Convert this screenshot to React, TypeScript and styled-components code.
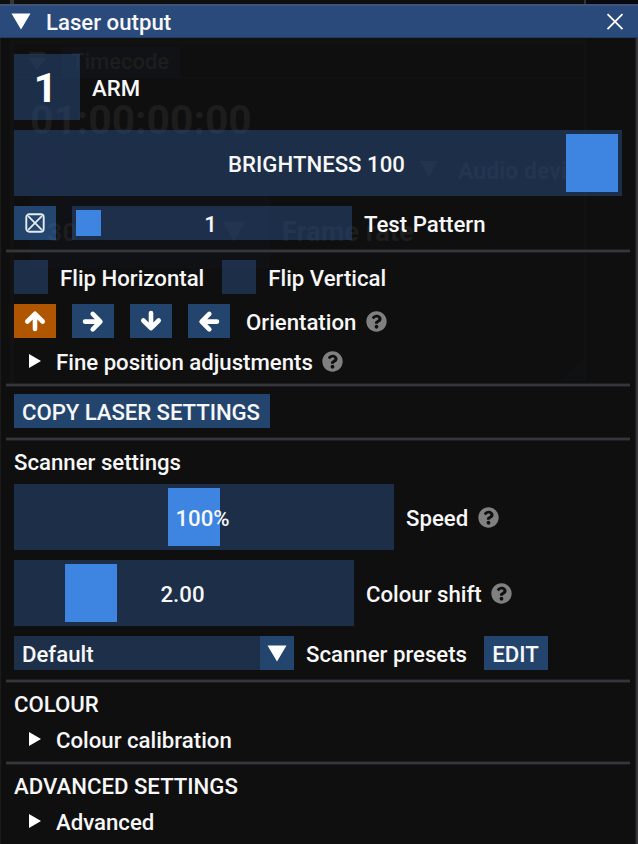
import React from "react";
import styled, { createGlobalStyle, css } from "styled-components";
import { FaQuestionCircle } from "react-icons/fa";

const GlobalStyle = createGlobalStyle`
  * { box-sizing: border-box; }
  body { margin: 0; background: #0f0f0f; }
`;

const Window = styled.main`
  position: relative;
  width: 638px;
  height: 844px;
  overflow: hidden;
  padding-top: 4px;
  background: #0f0f0f;
  color: #f7f7f7;
  font: 500 22.2px/26px Roboto, sans-serif;
  white-space: nowrap;
`;

const TitleBar = styled.header`
  position: relative;
  display: flex;
  align-items: center;
  height: 34px;
  padding: 0 14px 0 11px;
  gap: 15px;
  background: #294a7a;
  border-top: 2px solid #405478;
  border-bottom: 1px solid #213b61;
`;

const Title = styled.h1`
  flex: 1;
  margin: 0;
  padding-top: 1px;
  font: inherit;
`;

const Content = styled.div`
  position: relative;
  display: flex;
  flex-direction: column;
  align-items: flex-start;
  gap: 10px;
  padding: 16px 16px 0 14px;
`;

const Row = styled.div<{ $gap?: number }>`
  display: flex;
  align-items: center;
  gap: ${(p) => p.$gap ?? 12}px;
`;

const Separator = styled.hr`
  align-self: stretch;
  height: 4px;
  margin: -1px -8px -3px;
  border: solid #1e1e21;
  border-width: 1px 0;
  background: #36363d;
`;

const Label = styled.span`
  position: relative;
  top: 1px;
`;

const Track = styled.div<{ $width: number; $height?: number }>`
  position: relative;
  display: flex;
  align-items: center;
  justify-content: center;
  width: ${(p) => p.$width}px;
  height: ${(p) => p.$height ?? 66}px;
  padding-right: 3px;
  background: rgba(41, 74, 122, 0.54);
`;

const Handle = styled.div<{ $left: number; $width?: number }>`
  position: absolute;
  top: 4px;
  bottom: 4px;
  left: ${(p) => p.$left}px;
  width: ${(p) => p.$width ?? 52}px;
  background: #3d85e0;
`;

const Toggle = styled.div<{ $size: number }>`
  display: flex;
  align-items: center;
  justify-content: center;
  width: ${(p) => p.$size}px;
  height: ${(p) => p.$size}px;
  padding: 2px 3px 0 0;
  background: rgba(41, 74, 122, 0.54);
  color: #fff;
  font-size: 41px;
  font-weight: 700;
`;

const buttonBase = css`
  display: flex;
  align-items: center;
  justify-content: center;
  height: 34px;
  padding: 0;
  border: 0;
  color: #f7f7f7;
  font: inherit;
`;

const IconButton = styled.button<{ $active?: boolean }>`
  ${buttonBase}
  width: 42px;
  background: ${(p) => (p.$active ? "#b05500" : "rgba(66, 150, 250, 0.4)")};
`;

const TextButton = styled.button<{ $width: number }>`
  ${buttonBase}
  width: ${(p) => p.$width}px;
  padding-right: 1px;
  background: rgba(66, 150, 250, 0.4);
`;

const CopyButton = styled(TextButton)`
  padding-right: 2px;
  letter-spacing: -0.07px;
`;

const Combo = styled.div`
  display: flex;
  align-items: center;
  justify-content: space-between;
  width: 280px;
  height: 34px;
  padding-left: 8px;
  background: linear-gradient(to right, rgba(41, 74, 122, 0.54) 246px, rgba(66, 150, 250, 0.4) 246px);
`;

const ComboArrow = styled.span`
  display: flex;
  justify-content: center;
  width: 34px;
`;

const TreeRow = styled.div`
  display: flex;
  align-items: center;
  height: 26px;
  padding-left: 15px;
`;

const TreeLabel = styled(Label)`
  margin: 0 9px 0 15px;
`;

const HelpIcon = styled(FaQuestionCircle)`
  display: block;
  width: 21px;
  height: 21px;
  color: #808080;
`;

const LabelWithHelp = styled.div<{ $gap?: number }>`
  display: flex;
  align-items: center;
  gap: ${(p) => p.$gap ?? 10}px;
`;

/* Contents of the window underneath, faintly visible through this one. */
const Backdrop = styled.div`
  position: absolute;
  inset: 0;
`;

const GhostBox = styled.div<{ $x: number; $y: number; $w: number; $h: number; $color: string }>`
  position: absolute;
  left: ${(p) => p.$x}px;
  top: ${(p) => p.$y}px;
  width: ${(p) => p.$w}px;
  height: ${(p) => p.$h}px;
  background: ${(p) => p.$color};
`;

const GhostText = styled.span<{ $x: number; $y: number; $size: number; $bold?: boolean }>`
  position: absolute;
  left: ${(p) => p.$x}px;
  top: ${(p) => p.$y}px;
  color: #1d1d1d;
  font-size: ${(p) => p.$size}px;
  font-weight: ${(p) => (p.$bold ? 700 : 500)};
  line-height: 1;
`;

const GhostArrow = styled.svg<{ $x: number; $y: number }>`
  position: absolute;
  left: ${(p) => p.$x}px;
  top: ${(p) => p.$y}px;
`;

const DownTriangle = () => (
  <svg width="20" height="17" viewBox="0 0 20 17">
    <path d="M.5.5h19L10 16.5z" fill="#fff" />
  </svg>
);

const RightTriangle = () => (
  <svg width="12" height="14" viewBox="0 0 12 14">
    <path d="M0 0v14l12-7z" fill="#fff" />
  </svg>
);

const CloseIcon = () => (
  <svg width="18" height="18" viewBox="0 0 18 18">
    <path d="M1.5 1.2l15 15M16.5 1.2l-15 15" stroke="#fff" strokeWidth="1.8" />
  </svg>
);

const CrossedBox = () => (
  <svg width="20" height="20" viewBox="0 0 20 20" fill="none" stroke="#e6ebf1">
    <rect x="1.3" y="1.3" width="17.4" height="17.4" rx="3" strokeWidth="1.9" />
    <path d="M3.2 3.2l13.6 13.6M16.8 3.2L3.2 16.8" strokeWidth="1.7" />
  </svg>
);

const arrowPaths = {
  up: "M12 20V6M4.3 12.5L12 4.8l7.700 7.700",
  right: "M4 12.600H18M11.700 4.900L19.400 12.600l-7.700 7.700",
  down: "M12 4V18M4.300 11.500L12 19.200l7.700-7.700",
  left: "M20 12.600H6M12.300 4.900L4.600 12.600l7.700 7.700",
};

const Arrow = ({ dir }: { dir: keyof typeof arrowPaths }) => (
  <svg width="24" height="24" viewBox="0 0 24 24" fill="none">
    <path d={arrowPaths[dir]} stroke="#fff" strokeWidth="4.6" strokeLinecap="round" strokeLinejoin="round" />
  </svg>
);

export default function App() {
  return (
    <>
      <GlobalStyle />
      <Window>
        <Backdrop aria-hidden>
          <GhostBox $x={10} $y={0} $w={4} $h={4} $color="#36363d" />
          <GhostBox $x={584} $y={0} $w={2} $h={4} $color="#303036" />
          <GhostBox $x={586} $y={0} $w={52} $h={4} $color="#080813" />
          <GhostBox $x={10} $y={38} $w={4} $h={346} $color="#121213" />
          <GhostBox $x={14} $y={38} $w={571} $h={6} $color="#101211" />
          <GhostBox $x={62} $y={47} $w={118} $h={30} $color="#101216" />
          <GhostBox $x={14} $y={77} $w={571} $h={1} $color="#111412" />
          <GhostBox $x={584} $y={38} $w={2} $h={343} $color="#121213" />
          <GhostBox $x={30} $y={196} $w={240} $h={72} $color="#101115" />
          <GhostBox $x={31} $y={157} $w={30} $h={30} $color="#130f12" />
          <GhostBox $x={29} $y={52} $w={16} $h={3} $color="#1d1d1d" />
          <GhostArrow $x={28} $y={58} width="18" height="12" viewBox="0 0 18 12">
            <path d="M0 0h18L9 12z" fill="#1c1c1c" />
          </GhostArrow>
          <GhostArrow $x={420} $y={161} width="18" height="16" viewBox="0 0 18 16">
            <path d="M0 0h18L9 16z" fill="#1c1c1c" />
          </GhostArrow>
          <GhostArrow $x={223} $y={222} width="22" height="20" viewBox="0 0 22 20">
            <path d="M0 0h22L11 20z" fill="#1c1c1c" />
          </GhostArrow>
          <GhostArrow $x={561} $y={357} width="24" height="24" viewBox="0 0 24 24">
            <path d="M24 0v24H0z" fill="#101113" />
          </GhostArrow>
          <GhostText $x={71} $y={51} $size={22}>Timecode</GhostText>
          <GhostText $x={30} $y={100} $size={40.8} $bold>01:00:00:00</GhostText>
          <GhostText $x={458} $y={160} $size={23} $bold>Audio device</GhostText>
          <GhostText $x={47} $y={219} $size={26.5} $bold>30</GhostText>
          <GhostText $x={282} $y={219} $size={27.2} $bold>Frame rate</GhostText>
          <GhostBox $x={0} $y={38} $w={1} $h={806} $color="#1c1c1e" />
          <GhostBox $x={635} $y={38} $w={1} $h={806} $color="#1c1c1f" />
          <GhostBox $x={636} $y={5} $w={2} $h={839} $color="#343439" />
        </Backdrop>

        <TitleBar>
          <DownTriangle />
          <Title>Laser output</Title>
          <CloseIcon />
        </TitleBar>

        <Content>
          <Row>
            <Toggle $size={66}>1</Toggle>
            <Label>ARM</Label>
          </Row>
          <Track $width={608}>
            <Handle $left={552} />
            <Label>BRIGHTNESS 100</Label>
          </Track>
          <Row>
            <Row $gap={16}>
              <IconButton aria-label="Clear pattern"><CrossedBox /></IconButton>
              <Track $width={280} $height={34}>
                <Handle $left={4} $width={25} />
                <Label>1</Label>
              </Track>
            </Row>
            <Label>Test Pattern</Label>
          </Row>
          <Separator />
          <Row $gap={18}>
            <Row>
              <Toggle $size={34} />
              <Label>Flip Horizontal</Label>
            </Row>
            <Row>
              <Toggle $size={34} />
              <Label>Flip Vertical</Label>
            </Row>
          </Row>
          <Row $gap={16}>
            <IconButton $active aria-label="Up"><Arrow dir="up" /></IconButton>
            <IconButton aria-label="Right"><Arrow dir="right" /></IconButton>
            <IconButton aria-label="Down"><Arrow dir="down" /></IconButton>
            <IconButton aria-label="Left"><Arrow dir="left" /></IconButton>
            <LabelWithHelp>
              <Label>Orientation</Label>
              <HelpIcon />
            </LabelWithHelp>
          </Row>
          <TreeRow>
            <RightTriangle />
            <TreeLabel>Fine position adjustments</TreeLabel>
            <HelpIcon />
          </TreeRow>
          <Separator />
          <CopyButton $width={256}><Label>COPY LASER SETTINGS</Label></CopyButton>
          <Separator />
          <Label>Scanner settings</Label>
          <Row>
            <Track $width={380}>
              <Handle $left={154} />
              <Label>100%</Label>
            </Track>
            <LabelWithHelp>
              <Label>Speed</Label>
              <HelpIcon />
            </LabelWithHelp>
          </Row>
          <Row>
            <Track $width={340}>
              <Handle $left={51} />
              <Label>2.00</Label>
            </Track>
            <LabelWithHelp $gap={9}>
              <Label>Colour shift</Label>
              <HelpIcon />
            </LabelWithHelp>
          </Row>
          <Row $gap={17}>
            <Row>
              <Combo>
                <Label>Default</Label>
                <ComboArrow><DownTriangle /></ComboArrow>
              </Combo>
              <Label>Scanner presets</Label>
            </Row>
            <TextButton $width={64}><Label>EDIT</Label></TextButton>
          </Row>
          <Separator />
          <Label>COLOUR</Label>
          <TreeRow>
            <RightTriangle />
            <TreeLabel>Colour calibration</TreeLabel>
          </TreeRow>
          <Separator />
          <Label>ADVANCED SETTINGS</Label>
          <TreeRow>
            <RightTriangle />
            <TreeLabel>Advanced</TreeLabel>
          </TreeRow>
        </Content>
      </Window>
    </>
  );
}
